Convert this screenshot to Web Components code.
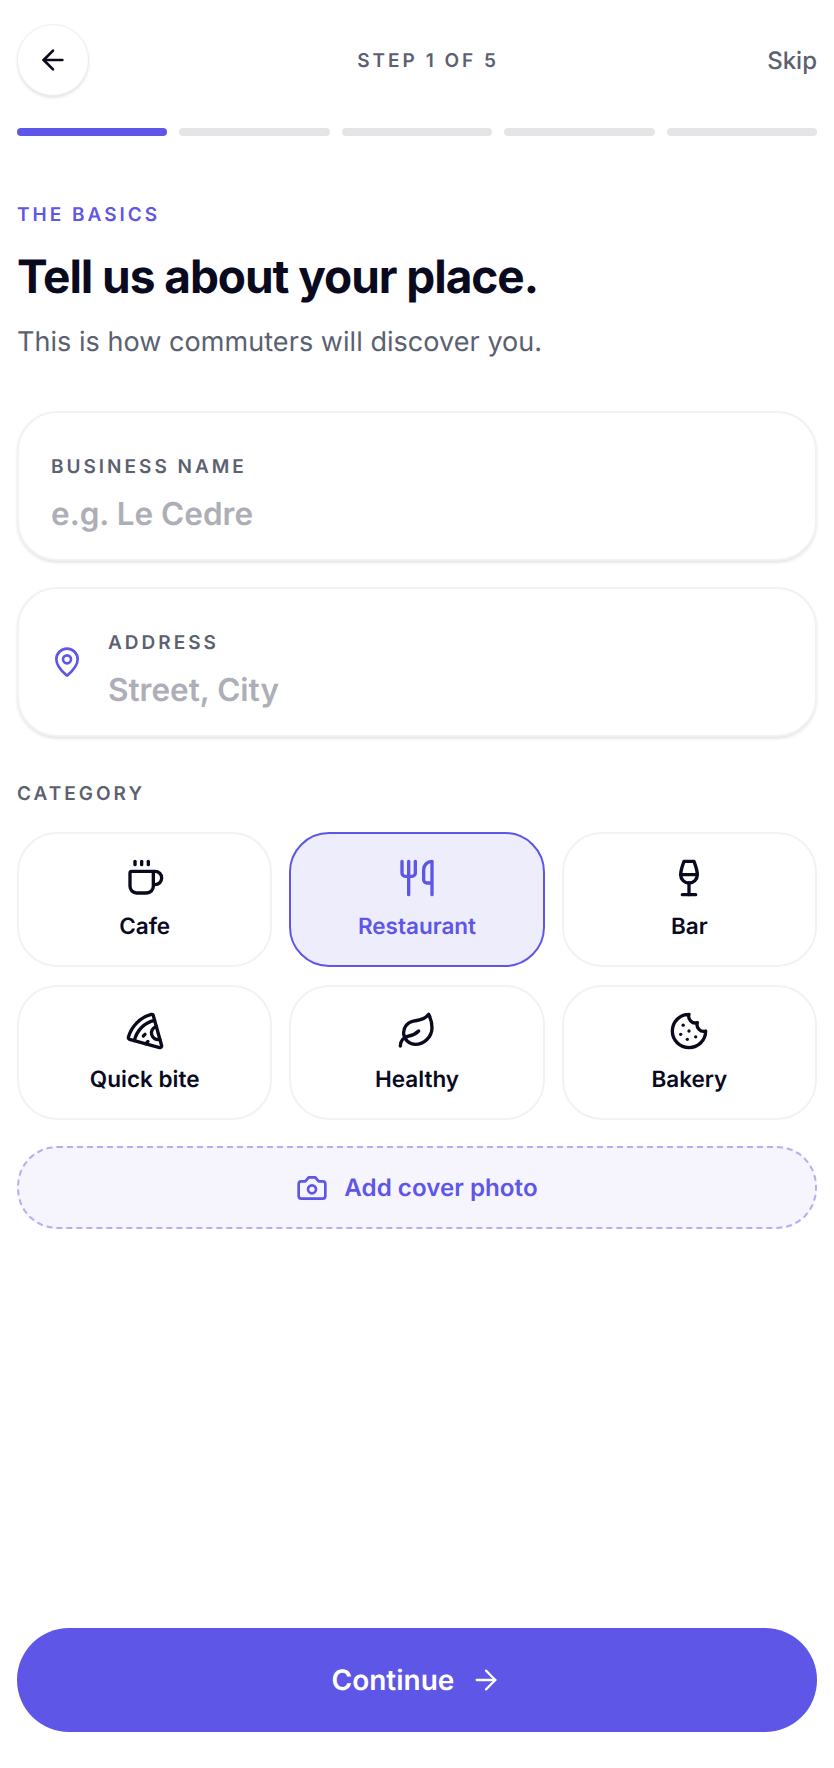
<!DOCTYPE html>
<html lang="en">
<head>
<meta charset="utf-8">
<title>Tell us about your place</title>
<style>
html, body { margin: 0; background: #fff; }
body { font-family: Inter, "Liberation Sans", sans-serif; color: #0a0a1f; text-rendering: geometricPrecision; }
</style>
</head>
<body>
<onboard-screen>
  <wizard-header slot="header" step="STEP 1 OF 5" action="Skip"></wizard-header>
  <step-progress slot="header" total="5" current="1"></step-progress>
  <intro-block slot="intro" eyebrow="THE BASICS" title="Tell us about your place." sub="This is how commuters will discover you."></intro-block>
  <field-card label="BUSINESS NAME" placeholder="e.g. Le Cedre"></field-card>
  <field-card label="ADDRESS" placeholder="Street, City" icon="pin"></field-card>
  <category-grid label="CATEGORY">
    <category-tile icon="coffee">Cafe</category-tile>
    <category-tile icon="utensils" selected>Restaurant</category-tile>
    <category-tile icon="wine">Bar</category-tile>
    <category-tile icon="pizza">Quick bite</category-tile>
    <category-tile icon="leaf">Healthy</category-tile>
    <category-tile icon="cookie">Bakery</category-tile>
  </category-grid>
  <photo-button>Add cover photo</photo-button>
  <primary-button slot="footer">Continue</primary-button>
</onboard-screen>

<script>
// icon bodies, lucide style 24 box
const ICONS = {
  back: '<path d="m12 19-7-7 7-7"/><path d="M19 12H5"/>',
  next: '<path d="M5 12h14"/><path d="m12 5 7 7-7 7"/>',
  pin: '<path d="M20 10c0 4.993-5.539 10.193-7.399 11.799a1 1 0 0 1-1.202 0C9.539 20.193 4 14.993 4 10a8 8 0 0 1 16 0"/><circle cx="12" cy="10" r="3"/>',
  coffee: '<path d="M10 2v2"/><path d="M14 2v2"/><path d="M16 8a1 1 0 0 1 1 1v8a4 4 0 0 1-4 4H7a4 4 0 0 1-4-4V9a1 1 0 0 1 1-1h14a4 4 0 1 1 0 8h-1"/><path d="M6 2v2"/>',
  utensils: '<path d="M3 2v7c0 1.1.9 2 2 2h4a2 2 0 0 0 2-2V2"/><path d="M7 2v20"/><path d="M21 15V2a5 5 0 0 0-5 5v6c0 1.1.9 2 2 2h3Zm0 0v7"/>',
  wine: '<path d="M8 22h8"/><path d="M7 10h10"/><path d="M12 15v7"/><path d="M12 15a5 5 0 0 0 5-5c0-2-.5-4-2-8H9c-1.5 4-2 6-2 8a5 5 0 0 0 5 5Z"/>',
  pizza: '<path d="m12 14-1 1"/><path d="m13.75 18.25-1.25 1.42"/><path d="M17.775 5.654a15.68 15.68 0 0 0-12.121 12.12"/><path d="M18.8 9.3a1 1 0 0 0 2.1 7.7"/><path d="M21.964 20.732a1 1 0 0 1-1.232 1.232l-18-5a1 1 0 0 1-.695-1.232A19.68 19.68 0 0 1 15.732 2.037a1 1 0 0 1 1.232.695z"/>',
  leaf: '<path d="M11 20A7 7 0 0 1 9.8 6.1C15.5 5 17 4.48 19 2c1 2 2 4.18 2 8 0 5.5-4.78 10-10 10Z"/><path d="M2 21c0-3 1.85-5.36 5.08-6C9.5 14.52 12 13 13 12"/>',
  cookie: '<path d="M12 2a10 10 0 1 0 10 10 4 4 0 0 1-5-5 4 4 0 0 1-5-5"/><path d="M8.5 8.5v.01"/><path d="M16 15.5v.01"/><path d="M12 12v.01"/><path d="M11 17v.01"/><path d="M7 14v.01"/>',
  camera: '<path d="M14.5 4h-5L7 7H4a2 2 0 0 0-2 2v9a2 2 0 0 0 2 2h16a2 2 0 0 0 2-2V9a2 2 0 0 0-2-2h-3l-2.5-3z"/><circle cx="12" cy="13" r="3"/>'
};

class UiIcon extends HTMLElement {
  connectedCallback() {
    const size = this.getAttribute('size') || 40;
    const sw = this.getAttribute('stroke') || 2;
    const root = this.shadowRoot || this.attachShadow({mode: 'open'});
    root.innerHTML = `<style>:host{display:block;width:${size}px;height:${size}px;flex:none} svg{display:block}</style>
      <svg width="${size}" height="${size}" viewBox="0 0 24 24" fill="none" stroke="currentColor" stroke-width="${sw}" stroke-linecap="round" stroke-linejoin="round">${ICONS[this.getAttribute('name')] || ''}</svg>`;
  }
}
customElements.define('ui-icon', UiIcon);

const screenTmpl = document.createElement('template');
screenTmpl.innerHTML = `<style>
  :host { display: flex; flex-direction: column; box-sizing: border-box; width: 834px; height: 1768px; padding: 24px 17px 36px; }
  .fields { display: flex; flex-direction: column; gap: 26px; }
  footer { margin-top: auto; }
</style>
<slot name="header"></slot>
<slot name="intro"></slot>
<div class="fields"><slot></slot></div>
<footer><slot name="footer"></slot></footer>`;
class OnboardScreen extends HTMLElement {
  constructor() {
    super();
    this.attachShadow({mode: 'open'}).appendChild(screenTmpl.content.cloneNode(true));
  }
}
customElements.define('onboard-screen', OnboardScreen);

class WizardHeader extends HTMLElement {
  connectedCallback() {
    this.attachShadow({mode: 'open'}).innerHTML = `<style>
      :host { display: flex; justify-content: space-between; align-items: center; height: 72px; }
      button { all: unset; box-sizing: border-box; width: 72px; height: 72px; border-radius: 50%; background: #fff; border: 1.5px solid #eeeef0;
        box-shadow: 0 2px 3px rgba(10,10,31,.1); display: flex; align-items: center; justify-content: center; color: #0a0a1f; }
      .step { font-size: 19px; font-weight: 600; letter-spacing: 3px; color: #5b6170; }
      .skip { font-size: 24px; font-weight: 500; color: #5b6170; }
    </style>
    <button aria-label="Back"><ui-icon name="back" size="32"></ui-icon></button>
    <span class="step">${this.getAttribute('step')}</span>
    <span class="skip">${this.getAttribute('action')}</span>`;
  }
}
customElements.define('wizard-header', WizardHeader);

class StepProgress extends HTMLElement {
  connectedCallback() {
    const total = +this.getAttribute('total');
    const current = +this.getAttribute('current');
    let bars = '';
    for (let i = 1; i <= total; i++) bars += `<i class="${i <= current ? 'on' : ''}"></i>`;
    this.attachShadow({mode: 'open'}).innerHTML = `<style>
      :host { display: flex; gap: 12px; margin-top: 32px; }
      i { flex: 1; height: 8px; border-radius: 4px; background: #e5e5e7; }
      i.on { background: #5e56e6; }
    </style>${bars}`;
  }
}
customElements.define('step-progress', StepProgress);

class IntroBlock extends HTMLElement {
  connectedCallback() {
    this.attachShadow({mode: 'open'}).innerHTML = `<style>
      :host { display: block; margin-top: 68px; margin-bottom: 51px; }
      .eyebrow { font-size: 19px; line-height: 22px; font-weight: 600; letter-spacing: 3px; color: #5e56e6; }
      h1 { margin: 23px 0 0; font-size: 46px; line-height: 56px; font-weight: 700; letter-spacing: -1.05px; color: #0a0a1f; }
      p { margin: 19px 0 0; font-size: 27px; line-height: 36px; letter-spacing: .05px; color: #5b6170; }
    </style>
    <div class="eyebrow">${this.getAttribute('eyebrow')}</div>
    <h1>${this.getAttribute('title')}</h1>
    <p>${this.getAttribute('sub')}</p>`;
  }
}
customElements.define('intro-block', IntroBlock);

class FieldCard extends HTMLElement {
  connectedCallback() {
    const icon = this.getAttribute('icon');
    this.attachShadow({mode: 'open'}).innerHTML = `<style>
      :host { display: flex; align-items: center; gap: 25px; box-sizing: border-box; height: 150px; padding: 0 32px; background: #fff;
        border: 2px solid #f2f2f4; border-radius: 40px; box-shadow: 0 2px 3px rgba(10,10,31,.1); }
      .text { padding-top: 17px; }
      .label { font-size: 19px; line-height: 22px; font-weight: 600; letter-spacing: 3px; color: #5b6170; }
      .ph { margin-top: 16px; font-size: 31.5px; line-height: 40px; font-weight: 600; color: #aeaeb6; }
      ui-icon { color: #5e56e6; }
    </style>
    ${icon ? `<ui-icon name="${icon}" size="32"></ui-icon>` : ''}
    <div class="text">
      <div class="label">${this.getAttribute('label')}</div>
      <div class="ph">${this.getAttribute('placeholder')}</div>
    </div>`;
  }
}
customElements.define('field-card', FieldCard);

class CategoryGrid extends HTMLElement {
  connectedCallback() {
    this.attachShadow({mode: 'open'}).innerHTML = `<style>
      :host { display: block; margin-top: 20px; }
      .label { font-size: 19px; line-height: 22px; font-weight: 600; letter-spacing: 3px; color: #5b6170; margin-bottom: 27px; }
      .grid { display: grid; grid-template-columns: repeat(3, 1fr); column-gap: 17px; row-gap: 18px; }
    </style>
    <div class="label">${this.getAttribute('label')}</div>
    <div class="grid"><slot></slot></div>`;
  }
}
customElements.define('category-grid', CategoryGrid);

class CategoryTile extends HTMLElement {
  connectedCallback() {
    this.attachShadow({mode: 'open'}).innerHTML = `<style>
      :host { display: flex; flex-direction: column; align-items: center; justify-content: center; gap: 15px; box-sizing: border-box; height: 135px; padding-bottom: 1px;
        background: #fff; border: 2px solid #f2f2f4; border-radius: 40px; color: #0a0a1f; font-size: 22.5px; line-height: 28px; font-weight: 600; }
      :host([selected]) { background: #eeedfb; border-color: #5e56e6; color: #5e56e6; }
    </style>
    <ui-icon name="${this.getAttribute('icon')}" size="40"></ui-icon>
    <slot></slot>`;
  }
}
customElements.define('category-tile', CategoryTile);

class PhotoButton extends HTMLElement {
  connectedCallback() {
    this.attachShadow({mode: 'open'}).innerHTML = `<style>
      :host { display: flex; align-items: center; justify-content: center; gap: 16px; box-sizing: border-box; height: 83px; background: #f6f5fd;
        border: 2px dashed #b5aef2; border-radius: 40px; color: #5e56e6; font-size: 24.2px; font-weight: 600; }
    </style>
    <ui-icon name="camera" size="32"></ui-icon>
    <slot></slot>`;
  }
}
customElements.define('photo-button', PhotoButton);

class PrimaryButton extends HTMLElement {
  connectedCallback() {
    this.attachShadow({mode: 'open'}).innerHTML = `<style>
      :host { display: flex; align-items: center; justify-content: center; gap: 16px; height: 104px; border-radius: 52px; background: #5e56e6;
        color: #fff; font-size: 28px; font-weight: 600; }
    </style>
    <slot></slot>
    <ui-icon name="next" size="32" stroke="1.7"></ui-icon>`;
  }
}
customElements.define('primary-button', PrimaryButton);
</script>
</body>
</html>
